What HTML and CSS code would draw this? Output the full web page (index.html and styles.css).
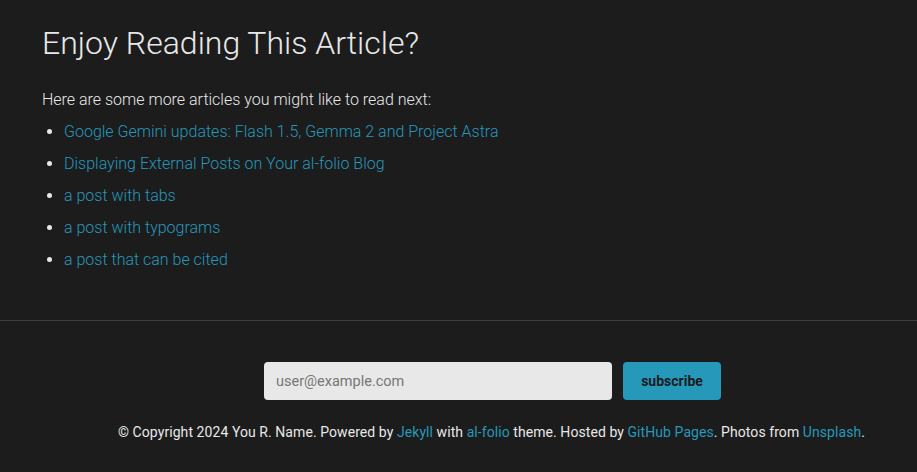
FILE: index.html
```html
<!DOCTYPE html>
<html>
<head>
	<meta charset="UTF-8">
	<title>Enjoy Reading This Article?</title>
	<link rel="stylesheet" href="styles.css">
</head>
<body>
	<div class="container">
		<h2>Enjoy Reading This Article?</h2>
		<p class="lead">Here are some more articles you might like to read next:</p>
		<ul class="related">
			<li><a href="#">Google Gemini updates: Flash 1.5, Gemma 2 and Project Astra</a></li>
			<li><a href="#">Displaying External Posts on Your al-folio Blog</a></li>
			<li><a href="#">a post with tabs</a></li>
			<li><a href="#">a post with typograms</a></li>
			<li><a href="#">a post that can be cited</a></li>
		</ul>
	</div>
	<footer class="footer">
		<form class="subscribe">
			<input type="email" placeholder="user@example.com">
			<button type="button">subscribe</button>
		</form>
		<p class="copyright">© Copyright 2024 You R. Name. Powered by <a href="#">Jekyll</a> with <a href="#">al-folio</a> theme. Hosted by <a href="#">GitHub Pages</a>. Photos from <a href="#">Unsplash</a>.</p>
	</footer>
</body>
</html>
```

FILE: styles.css
```css
body {
	margin: 0;
	background-color: #1c1c1d;
	color: #e8e8e8;
	font-family: Roboto, "Liberation Sans", sans-serif;
	font-weight: 300;
	font-size: 16px;
}
a {
	color: #2698ba;
	text-decoration: none;
}
.container {
	padding: 24px 42px 40px;
}
h2 {
	margin: 0 0 26px;
	font-size: 32px;
	font-weight: 300;
	line-height: 1.2;
}
.lead {
	margin: 0 0 8px;
	line-height: 24px;
}
.related {
	margin: 0;
	padding-left: 22px;
}
.related li {
	line-height: 24px;
	margin-bottom: 8px;
}
.footer {
	border-top: 1px solid #3d3d3d;
	padding-top: 41px;
	text-align: center;
}
.subscribe {
	display: flex;
	justify-content: center;
	gap: 11px;
	margin-left: 68px;
}
.subscribe input {
	width: 348px;
	height: 38px;
	box-sizing: border-box;
	border: none;
	border-radius: 4px;
	background-color: #e8e8e8;
	padding: 0 12px;
	font-family: Roboto, sans-serif;
	font-size: 14.5px;
	color: #333;
}
.subscribe input::placeholder {
	color: #777;
}
.subscribe button {
	width: 98px;
	height: 38px;
	border: none;
	border-radius: 4px;
	background-color: #2698ba;
	color: #1c1c1d;
	font-family: Roboto, sans-serif;
	font-weight: 700;
	font-size: 14px;
	cursor: pointer;
}
.copyright {
	margin: 24px 0 0 66px;
	font-size: 14px;
	font-weight: 400;
	letter-spacing: 0.07px;
}
```
